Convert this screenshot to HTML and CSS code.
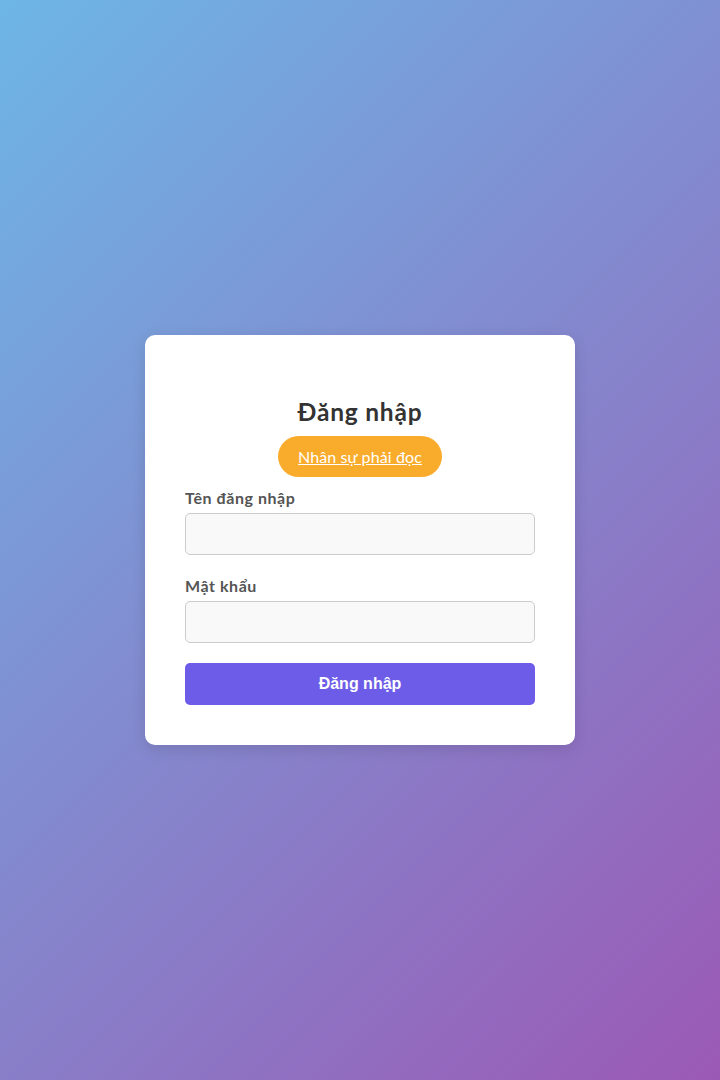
FILE: index.html
```html
<!DOCTYPE html>
<html lang="vi">
<head>
<meta charset="utf-8">
<title>Đăng nhập</title>
<link rel="stylesheet" href="styles.css">
</head>
<body>
<div class="card">
  <h2 class="title">Đăng nhập</h2>
  <div class="notice-wrap"><a class="notice" href="#">Nhân sự phải đọc</a></div>
  <form class="form">
    <div class="group">
      <label class="label" for="u">Tên đăng nhập</label>
      <input class="input" id="u" type="text">
    </div>
    <div class="group">
      <label class="label" for="p">Mật khẩu</label>
      <input class="input" id="p" type="password">
    </div>
    <button class="submit" type="button">Đăng nhập</button>
  </form>
</div>
</body>
</html>
```
FILE: styles.css
```css
html, body {
  margin: 0;
  padding: 0;
}
body {
  min-height: 100vh;
  display: flex;
  align-items: center;
  justify-content: center;
  background: linear-gradient(135deg, #6db6e5 0%, #9b59b6 100%);
  font-family: Lato, "Noto Sans", sans-serif;
}
.card {
  width: 430px;
  box-sizing: border-box;
  background: #fff;
  border-radius: 10px;
  padding: 40px;
  box-shadow: 0 4px 15px rgba(0, 0, 0, 0.12);
}
.title {
  margin: 22px 0 10px;
  text-align: center;
  font-size: 24.5px;
  font-weight: 700;
  color: #333;
  line-height: 29px;
  letter-spacing: 0.8px;
}
.notice-wrap {
  text-align: center;
  margin-bottom: 10px;
}
.notice {
  display: inline-block;
  background: #f9ac2c;
  color: #fff;
  font-size: 16px;
  line-height: 21px;
  padding: 10px 20px;
  border-radius: 21px;
  text-decoration: underline;
  letter-spacing: 0.12px;
}
.group {
  margin-bottom: 20px;
}
.label {
  display: block;
  font-size: 16px;
  font-weight: 700;
  color: #555;
  line-height: 21px;
  margin-bottom: 5px;
  letter-spacing: 0.55px;
}
.input {
  display: block;
  width: 100%;
  box-sizing: border-box;
  height: 42px;
  border: 1px solid #ccc;
  border-radius: 5px;
  background: #f9f9f9;
  padding: 10px;
  font-size: 16px;
}
.submit {
  display: block;
  width: 100%;
  height: 42px;
  border: none;
  border-radius: 5px;
  background: #6c5ce7;
  color: #fff;
  font-family: "Liberation Sans", Arial, sans-serif;
  font-size: 16px;
  font-weight: 700;
}
```
